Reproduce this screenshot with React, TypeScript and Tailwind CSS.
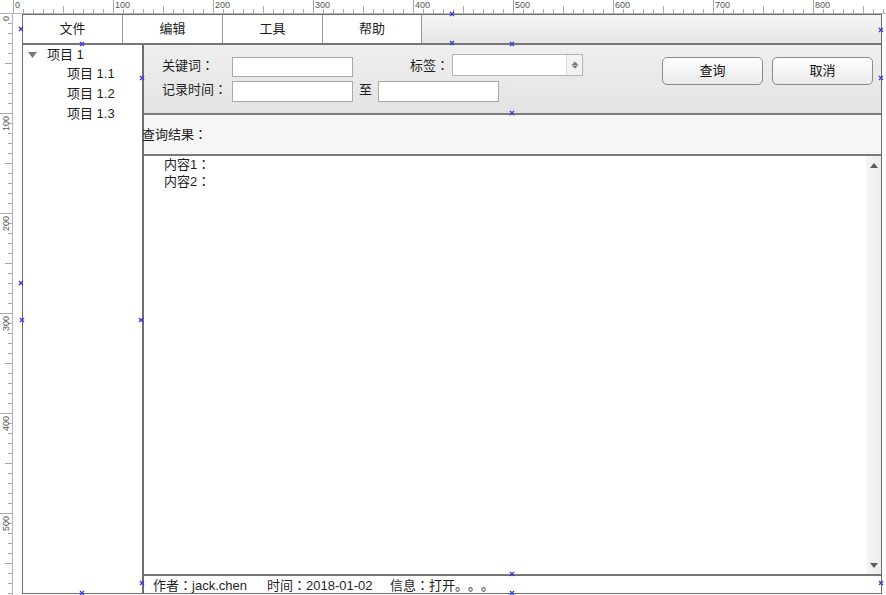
import React from "react";

const topTicks = Array.from({ length: 88 }, (_, i) => i);
const leftTicks = Array.from({ length: 59 }, (_, i) => i);

// little blue "x" handles the editor draws on the selected widgets
const handles: [number, number][] = [
  [21, 29],
  [82, 44],
  [452, 14],
  [452, 43],
  [512, 44],
  [512, 113],
  [881, 30],
  [881, 78],
  [142, 78],
  [21, 283],
  [22, 320],
  [141, 320],
  [142, 583],
  [512, 574],
  [512, 593],
  [82, 593],
  [881, 583],
];

function TopRuler() {
  return (
    <svg width={886} height={14} className="block shrink-0">
      <line x1={0} y1={13.5} x2={886} y2={13.5} stroke="#b5b5b5" />
      {topTicks.map((k) => {
        const x = 13.5 + k * 10;
        const h = k % 10 === 0 ? 13 : k % 5 === 0 ? 7 : 4;
        return <line key={k} x1={x} y1={13} x2={x} y2={13 - h} stroke="#a8a8a8" />;
      })}
      {topTicks
        .filter((k) => k % 10 === 0)
        .map((k) => (
          <text
            key={k}
            x={15 + k * 10}
            y={8}
            fontSize={9}
            fill="#555"
            fontFamily="Liberation Sans, sans-serif"
          >
            {k * 10}
          </text>
        ))}
    </svg>
  );
}

function LeftRuler() {
  return (
    <svg width={13} height={581} className="block shrink-0">
      <line x1={12.5} y1={0} x2={12.5} y2={581} stroke="#b5b5b5" />
      {leftTicks.map((k) => {
        const y = k * 10 - 0.5;
        const w = k % 10 === 0 ? 12 : k % 5 === 0 ? 7 : 4;
        return <line key={k} x1={12} y1={y} x2={12 - w} y2={y} stroke="#a8a8a8" />;
      })}
      {leftTicks
        .filter((k) => k % 10 === 0)
        .map((k) => (
          <text
            key={k}
            x={0}
            y={0}
            fontSize={9}
            fill="#555"
            fontFamily="Liberation Sans, sans-serif"
            textAnchor="end"
            transform={`translate(9 ${k * 10 + 2}) rotate(-90)`}
          >
            {k * 10}
          </text>
        ))}
    </svg>
  );
}

function Handle({ x, y }: { x: number; y: number }) {
  return (
    <svg
      width={6}
      height={6}
      className="absolute"
      style={{ left: x - 3, top: y - 3 }}
    >
      <path d="M1 1 L5 5 M5 1 L1 5" stroke="#3b3bd6" strokeWidth={1.4} />
    </svg>
  );
}

// full-width colon, centered in its cell like the original font does
function C() {
  return <span className="font-['Noto_Sans_CJK_TC',sans-serif] leading-none">：</span>;
}

function Input({ w, h }: { w: string; h: string }) {
  return <div className={`${w} ${h} border border-[#a9a9a9] bg-white`} />;
}

function Button({ label }: { label: string }) {
  return (
    <div className="w-[101px] h-[28px] rounded-[5px] border border-[#8c8c8c] bg-gradient-to-b from-white to-[#e9e9e9] flex items-center justify-center text-[13px] text-[#111]">
      {label}
    </div>
  );
}

export default function App() {
  const menus = ["文件", "编辑", "工具", "帮助"];

  return (
    <div className="relative w-[886px] h-[595px] bg-white overflow-hidden font-['Liberation_Sans','Noto_Sans_CJK_SC',sans-serif] text-[13px] text-[#1e1e1e] [text-spacing-trim:space-all]">
      <TopRuler />
      <div className="flex">
        <LeftRuler />
        <div className="w-[9px] shrink-0" />
        <div className="w-[860px] h-[580px] border border-[#6e6e6e] flex flex-col">
          {/* menu bar */}
          <div className="h-[30px] shrink-0 flex border-b-2 border-[#767676] bg-gradient-to-b from-[#f4f4f4] to-[#e6e6e6]">
            {menus.map((m, i) => (
              <div
                key={m}
                className={`${i === 3 ? "w-[99px]" : "w-[100px]"} h-full bg-white border-r border-[#9a9a9a] flex items-center justify-center`}
              >
                {m}
              </div>
            ))}
          </div>

          <div className="flex-1 flex min-h-0">
            {/* tree */}
            <div className="w-[121px] shrink-0 border-r-2 border-[#6e6e6e] bg-white">
              <div className="h-[19px] flex items-center pl-[5px]">
                <svg width={9} height={6} className="shrink-0">
                  <path d="M0 0 L9 0 L4.5 6 Z" fill="#777" />
                </svg>
                <span className="ml-[10px]">项目 1</span>
              </div>
              {["项目 1.1", "项目 1.2", "项目 1.3"].map((t) => (
                <div key={t} className="h-[20px] flex items-center pl-[44px]">
                  {t}
                </div>
              ))}
            </div>

            {/* right side */}
            <div className="flex-1 flex flex-col min-w-0">
              {/* search panel */}
              <div className="h-[70px] shrink-0 border-b-2 border-[#7c7c7c] bg-gradient-to-b from-[#efefef] to-[#e3e3e3] flex pl-[18px] pr-[8px]">
                <div className="pt-[9px]">
                  <div className="flex items-start h-[22px]">
                    <div className="w-[70px] leading-[24px] whitespace-nowrap">
                      关键词<C />
                    </div>
                    <div className="mt-[3px]">
                      <Input w="w-[121px]" h="h-[20px]" />
                    </div>
                    <div className="ml-[57px] w-[42px] leading-[24px] whitespace-nowrap">
                      标签<C />
                    </div>
                    <div className="w-[131px] h-[22px] border border-[#b4b4b4] bg-white flex">
                      <div className="flex-1" />
                      <div className="w-[16px] border-l border-[#dcdcdc] bg-[#f3f3f3] flex items-center justify-center">
                        <svg width={8} height={8}>
                          <path d="M4 0.5 L7.5 4 L0.5 4 Z M0.5 4.5 L7.5 4.5 L4 7.5 Z" fill="#7a7a7a" />
                        </svg>
                      </div>
                    </div>
                  </div>
                  <div className="flex items-start h-[21px] mt-[5px]">
                    <div className="w-[70px] leading-[17px] whitespace-nowrap">
                      记录时间<C />
                    </div>
                    <Input w="w-[121px]" h="h-[21px]" />
                    <div className="ml-[6px] w-[19px] leading-[17px]">至</div>
                    <Input w="w-[121px]" h="h-[21px]" />
                  </div>
                </div>
                <div className="ml-auto pt-[12px] flex gap-[9px]">
                  <Button label="查询" />
                  <Button label="取消" />
                </div>
              </div>

              {/* results header */}
              <div className="h-[41px] shrink-0 border-b-2 border-[#7a7a7a] bg-[#f6f6f6] flex items-center">
                <span className="-ml-[2px] mt-[1px]">
                  查询结果<C />
                </span>
              </div>

              {/* results list */}
              <div className="flex-1 flex min-h-0 bg-white">
                <div className="flex-1 pl-[20px]">
                  <div className="h-[17px] leading-[17px]">
                    内容1<C />
                  </div>
                  <div className="h-[17px] leading-[17px]">
                    内容2<C />
                  </div>
                </div>
                <div className="w-[15px] shrink-0 bg-gradient-to-r from-[#f6f6f6] to-[#ededed] flex flex-col items-center justify-between pt-[7px] pb-[6px]">
                  <svg width={8} height={5}>
                    <path d="M4 0 L8 5 L0 5 Z" fill="#5c5c5c" />
                  </svg>
                  <svg width={8} height={5}>
                    <path d="M0 0 L8 0 L4 5 Z" fill="#5c5c5c" />
                  </svg>
                </div>
              </div>

              {/* status bar */}
              <div className="h-[19px] shrink-0 border-t-2 border-[#767676] bg-white flex pl-[9px] leading-[20px] whitespace-nowrap">
                <span className="w-[114px]">
                  作者<C />jack.chen
                </span>
                <span className="w-[123px]">
                  时间<C />2018-01-02
                </span>
                <span>
                  信息<C />打开。。。
                </span>
              </div>
            </div>
          </div>
        </div>
      </div>

      {handles.map(([x, y], i) => (
        <Handle key={i} x={x} y={y} />
      ))}
    </div>
  );
}
